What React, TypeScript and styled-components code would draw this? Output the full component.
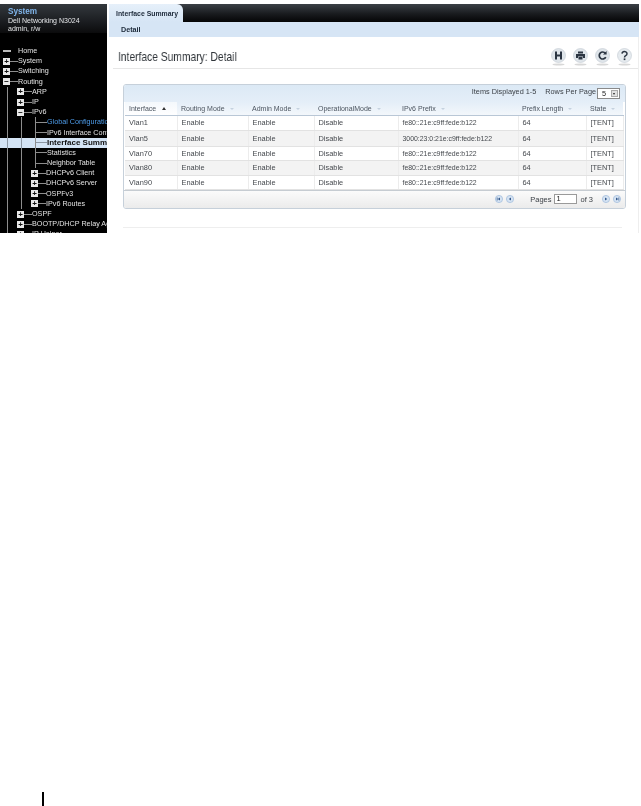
import React from 'react';
import styled, { createGlobalStyle } from 'styled-components';

const GlobalStyle = createGlobalStyle`
  html, body {
    margin: 0;
    padding: 0;
    background: #fff;
  }
  body {
    font-family: "Liberation Sans", Arial, sans-serif;
  }
`;

const Page = styled.div`
  width: 641px;
  height: 806px;
  overflow: hidden;
  display: flex;
  flex-direction: column;
  background: #fff;
`;

const Screenshot = styled.div`
  display: flex;
  gap: 2px;
  height: 229px;
  margin-top: 4px;
  filter: blur(0.3px);
  will-change: transform;
`;

const Sidebar = styled.aside`
  width: 107px;
  flex: none;
  background: #000;
  overflow: hidden;
  display: flex;
  flex-direction: column;
`;

const SystemBox = styled.div`
  height: 35px;
  padding: 3px 0 0 8px;
  box-sizing: border-box;
  background: linear-gradient(#33383d, #17191c 70%, #0b0b0c);
  color: #e4e6e8;
  font-size: 7px;
  line-height: 8px;
  margin-bottom: 7px;
`;

const SystemTitle = styled.div`
  color: #7fb4ea;
  font-size: 8.2px;
  font-weight: bold;
  line-height: 10px;
`;

const Tree = styled.div`
  display: flex;
  flex-direction: column;
  margin-top: 6px;
`;

const TreeRow = styled.div<{ $selected?: boolean }>`
  height: 10.2px;
  display: flex;
  align-items: stretch;
  white-space: nowrap;
  background: ${({ $selected }) => ($selected ? '#d4e4f5' : 'transparent')};
  color: ${({ $selected }) => ($selected ? '#111' : '#e2e2e2')};
`;

const Guide = styled.span<{ $line: boolean; $selected?: boolean }>`
  flex: none;
  width: 14px;
  position: relative;
  &::before {
    content: '';
    display: ${({ $line }) => ($line ? 'block' : 'none')};
    position: absolute;
    left: 7px;
    top: 0;
    bottom: 0;
    width: 1px;
    background: ${({ $selected }) => ($selected ? '#8c97a3' : '#8d8d8d')};
  }
`;

const ToggleCell = styled.span`
  flex: none;
  width: 15px;
  margin-left: 3px;
  display: flex;
  align-items: center;
`;

const Toggle = styled.span`
  width: 7px;
  height: 7px;
  flex: none;
  background: #e8e8e8;
  color: #111;
  font-size: 8px;
  font-weight: bold;
  line-height: 7px;
  text-align: center;
  overflow: hidden;
`;

const Connector = styled.span<{ $selected?: boolean }>`
  flex: 1;
  height: 1px;
  background: ${({ $selected }) => ($selected ? '#8c97a3' : '#8d8d8d')};
`;

const HomeDash = styled.span`
  flex: none;
  width: 8px;
  height: 2px;
  background: #bbb;
`;

const LeafCell = styled.span`
  flex: none;
  width: 12px;
  margin-left: 7px;
  display: flex;
  align-items: center;
  border-left: 1px solid #8d8d8d;
  box-sizing: border-box;
`;

const Label = styled.span<{ $tone?: 'link' | 'strong' }>`
  font-size: ${({ $tone }) => ($tone === 'strong' ? '8px' : '7.2px')};
  font-weight: ${({ $tone }) => ($tone === 'strong' ? 'bold' : 'normal')};
  color: ${({ $tone }) => ($tone === 'link' ? '#4d9be8' : 'inherit')};
  line-height: 10.2px;
`;

const Main = styled.main`
  flex: 1;
  min-width: 0;
  display: flex;
  flex-direction: column;
  margin-right: 2px;
`;

const TabBar = styled.div`
  height: 18px;
  flex: none;
  display: flex;
  background: linear-gradient(#3b4046, #191b1e 55%, #050506);
`;

const Tab = styled.div`
  width: 74px;
  background: linear-gradient(#e6f0fa, #d6e5f5);
  border-top-right-radius: 6px;
  color: #1d2a3a;
  font-size: 6.9px;
  font-weight: bold;
  line-height: 19px;
  padding-left: 7px;
  box-sizing: border-box;
`;

const SubNav = styled.div`
  height: 15px;
  flex: none;
  background: #d6e5f5;
  color: #1d2a3a;
  font-size: 7.2px;
  font-weight: bold;
  line-height: 16px;
  padding-left: 12px;
`;

const Content = styled.div`
  flex: 1;
  border-right: 1px solid #eeeeee;
`;

const TitleRow = styled.div`
  height: 32px;
  box-sizing: border-box;
  margin-left: 4px;
  padding: 8px 6px 0 5px;
  display: flex;
  align-items: center;
  justify-content: space-between;
  border-bottom: 1px solid #e6e6e6;
`;

const Title = styled.h1`
  margin: 0;
  font-size: 13px;
  font-weight: normal;
  color: #30353a;
  white-space: nowrap;
  transform: scaleX(0.79);
  transform-origin: left center;
`;

const Actions = styled.div`
  display: flex;
  gap: 7px;
`;

const ActionIcon = styled.svg`
  width: 15px;
  height: 18px;
  display: block;
`;

const Panel = styled.section`
  width: 501px;
  margin: 15px 0 0 14px;
  border: 1px solid #c6d0da;
  border-radius: 3px;
  overflow: hidden;
`;

const PanelTop = styled.div`
  height: 17px;
  display: flex;
  justify-content: flex-end;
  align-items: center;
  gap: 9px;
  padding-right: 5px;
  background: linear-gradient(#dce9f5, #e4eef8);
  font-size: 7.3px;
  color: #3a3f45;
`;

const PerPage = styled.span`
  margin-bottom: 4px;
`;

const RowsSelect = styled.span`
  width: 23px;
  height: 11px;
  margin-left: -8px;
  background: #fff;
  border: 1px solid #8a8a8a;
  box-sizing: border-box;
  display: flex;
  align-items: center;
  justify-content: space-between;
  padding: 0 1px 0 4px;
  color: #222;
`;

const SelectArrow = styled.span`
  width: 7px;
  height: 7px;
  background: #e2e2e2;
  border: 1px solid #aaa;
  box-sizing: border-box;
  position: relative;
  &::after {
    content: '';
    position: absolute;
    left: 1px;
    top: 2px;
    border: 1.5px solid transparent;
    border-top: 2px solid #222;
    border-bottom: 0;
  }
`;

const Grid = styled.table`
  width: 498px;
  margin-left: 1px;
  border-collapse: collapse;
  table-layout: fixed;
  font-size: 7.4px;
  color: #45494e;
`;

const HeadCell = styled.th<{ $active?: boolean; $w: number }>`
  width: ${({ $w }) => $w}px;
  height: 13px;
  box-sizing: border-box;
  padding: 0 0 0 4px;
  text-align: left;
  font-weight: normal;
  font-size: 7px;
  color: #4c5560;
  background: ${({ $active }) => ($active ? 'linear-gradient(#f4f8fc, #ffffff)' : 'linear-gradient(#e4eef8, #f3f7fb)')};
  border-bottom: 1px solid #b9c7d6;
  white-space: nowrap;
  overflow: hidden;
`;

const SortMark = styled.span<{ $active?: boolean }>`
  display: inline-block;
  margin-left: ${({ $active }) => ($active ? '6px' : '5px')};
  vertical-align: 1px;
  border-left: 2px solid transparent;
  border-right: 2px solid transparent;
  border-bottom: ${({ $active }) => ($active ? '3px solid #333' : '0')};
  border-top: ${({ $active }) => ($active ? '0' : '2px solid #c5d2df')};
`;

const BodyRow = styled.tr<{ $alt: boolean; $h: number }>`
  height: ${({ $h }) => $h}px;
  background: ${({ $alt }) => ($alt ? '#f3f3f3' : '#fff')};
`;

const Cell = styled.td<{ $narrow?: boolean }>`
  box-sizing: border-box;
  padding: 0 0 0 4px;
  border-bottom: 1px solid #e2e2e2;
  border-right: 1px solid #ececec;
  font-size: ${({ $narrow }) => ($narrow ? '6.9px' : 'inherit')};
  white-space: nowrap;
  overflow: hidden;
`;

const PanelBottom = styled.div`
  height: 18px;
  box-sizing: border-box;
  border-top: 1px solid #c6ccd2;
  background: linear-gradient(#fbfbfb, #ebebeb);
  display: flex;
  align-items: center;
  justify-content: flex-end;
  padding-right: 4px;
  font-size: 7.5px;
  color: #3a3f45;
`;

const NavGroup = styled.div<{ $before?: number; $after?: number }>`
  display: flex;
  gap: 3px;
  margin-left: ${({ $before }) => $before ?? 0}px;
  margin-right: ${({ $after }) => $after ?? 0}px;
`;

const NavIcon = styled.svg`
  width: 8px;
  height: 8px;
  display: block;
`;

const PageInput = styled.span`
  width: 23px;
  height: 10px;
  margin: 0 3px;
  background: #fff;
  border: 1px solid #9a9a9a;
  box-sizing: border-box;
  padding-left: 1px;
  line-height: 8px;
  color: #222;
`;

const EndRule = styled.div`
  width: 499px;
  margin: 18px 0 0 14px;
  height: 1px;
  background: #eeeeee;
`;

const PageMark = styled.div`
  width: 2px;
  height: 14px;
  margin: 559px 0 0 42px;
  background: #000;
`;

type Node = {
  label: string;
  guides: boolean[];
  kind: 'home' | 'open' | 'closed' | 'leaf';
  tone?: 'link' | 'strong';
  selected?: boolean;
};

const deep = [true, true];

const nodes: Node[] = [
  { label: 'Home', guides: [], kind: 'home' },
  { label: 'System', guides: [], kind: 'closed' },
  { label: 'Switching', guides: [], kind: 'closed' },
  { label: 'Routing', guides: [], kind: 'open' },
  { label: 'ARP', guides: [true], kind: 'closed' },
  { label: 'IP', guides: [true], kind: 'closed' },
  { label: 'IPv6', guides: [true], kind: 'open' },
  { label: 'Global Configuration', guides: deep, kind: 'leaf', tone: 'link' },
  { label: 'IPv6 Interface Configuration', guides: deep, kind: 'leaf' },
  { label: 'Interface Summary', guides: deep, kind: 'leaf', tone: 'strong', selected: true },
  { label: 'Statistics', guides: deep, kind: 'leaf' },
  { label: 'Neighbor Table', guides: deep, kind: 'leaf' },
  { label: 'DHCPv6 Client', guides: deep, kind: 'closed' },
  { label: 'DHCPv6 Server', guides: deep, kind: 'closed' },
  { label: 'OSPFv3', guides: deep, kind: 'closed' },
  { label: 'IPv6 Routes', guides: deep, kind: 'closed' },
  { label: 'OSPF', guides: [true], kind: 'closed' },
  { label: 'BOOTP/DHCP Relay Agent', guides: [true], kind: 'closed' },
  { label: 'IP Helper', guides: [true], kind: 'closed' },
];

const columns = [
  { title: 'Interface', width: 52 },
  { title: 'Routing Mode', width: 71 },
  { title: 'Admin Mode', width: 66 },
  { title: 'OperationalMode', width: 84 },
  { title: 'IPv6 Prefix', width: 120 },
  { title: 'Prefix Length', width: 68 },
  { title: 'State', width: 37 },
];

const rows = [
  { name: 'Vlan1', prefix: 'fe80::21e:c9ff:fede:b122', h: 15 },
  { name: 'Vlan5', prefix: '3000:23:0:21e:c9ff:fede:b122', h: 16 },
  { name: 'Vlan70', prefix: 'fe80::21e:c9ff:fede:b122', h: 14 },
  { name: 'Vlan80', prefix: 'fe80::21e:c9ff:fede:b122', h: 15 },
  { name: 'Vlan90', prefix: 'fe80::21e:c9ff:fede:b122', h: 14 },
];

function TreeItem({ node }: { node: Node }) {
  const { label, guides, kind, tone, selected } = node;
  return (
    <TreeRow $selected={selected}>
      {guides.map((line, i) => (
        <Guide key={i} $line={line} $selected={selected} />
      ))}
      {kind === 'leaf' ? (
        <LeafCell>
          <Connector $selected={selected} />
        </LeafCell>
      ) : (
        <ToggleCell>
          {kind === 'home' ? (
            <HomeDash />
          ) : (
            <>
              <Toggle>{kind === 'open' ? '−' : '+'}</Toggle>
              <Connector />
            </>
          )}
        </ToggleCell>
      )}
      <Label $tone={tone}>{label}</Label>
    </TreeRow>
  );
}

function SaveIcon() {
  return (
    <ActionIcon viewBox="0 0 15 18">
      <ellipse cx="7.5" cy="16.5" rx="6" ry="1" fill="#d8d8d8" />
      <circle cx="7.5" cy="7.5" r="7" fill="#dfe5ea" stroke="#c2cad2" strokeWidth="0.6" />
      <path d="M4 3.5h2v3h3v-3h2v8H9V8.5H6v3H4z" fill="#2b3542" />
    </ActionIcon>
  );
}

function PrintIcon() {
  return (
    <ActionIcon viewBox="0 0 15 18">
      <ellipse cx="7.5" cy="16.5" rx="6" ry="1" fill="#d8d8d8" />
      <circle cx="7.5" cy="7.5" r="7" fill="#dfe5ea" stroke="#c2cad2" strokeWidth="0.6" />
      <path d="M5 3.5h5v2H5zM3 6h9v4h-2V8.5H5V10H3zM5.5 9h4v2.5h-4z" fill="#2b3542" />
    </ActionIcon>
  );
}

function RefreshIcon() {
  return (
    <ActionIcon viewBox="0 0 15 18">
      <ellipse cx="7.5" cy="16.5" rx="6" ry="1" fill="#d8d8d8" />
      <circle cx="7.5" cy="7.5" r="7" fill="#dfe5ea" stroke="#c2cad2" strokeWidth="0.6" />
      <path d="M10.8 9.2A3.5 3.5 0 1 1 10.4 5.2" fill="none" stroke="#2b3542" strokeWidth="1.7" />
      <path d="M11.6 3v3.6H8z" fill="#2b3542" />
    </ActionIcon>
  );
}

function HelpIcon() {
  return (
    <ActionIcon viewBox="0 0 15 18">
      <ellipse cx="7.5" cy="16.5" rx="6" ry="1" fill="#d8d8d8" />
      <circle cx="7.5" cy="7.5" r="7" fill="#e6ebef" stroke="#c2cad2" strokeWidth="0.6" />
      <path d="M5 5.6a2.5 2.2 0 1 1 3.7 2c-.9.5-1.2.9-1.2 1.9" fill="none" stroke="#2b3542" strokeWidth="1.5" />
      <rect x="6.7" y="10.4" width="1.7" height="1.7" fill="#2b3542" />
    </ActionIcon>
  );
}

function PagerIcon({ dir, end }: { dir: 'left' | 'right'; end?: boolean }) {
  const arrow = dir === 'left' ? 'M5 2.4v3.2L2.8 4z' : 'M3 2.4v3.2L5.2 4z';
  const cap = dir === 'left' ? 'M1.8 2.4h.7v3.2h-.7z' : 'M5.5 2.4h.7v3.2h-.7z';
  return (
    <NavIcon viewBox="0 0 8 8">
      <circle cx="4" cy="4" r="3.6" fill="#d5e3f3" stroke="#9db9da" strokeWidth="0.7" />
      <path d={arrow} fill="#34578a" />
      {end && <path d={cap} fill="#34578a" />}
    </NavIcon>
  );
}

export default function App() {
  return (
    <>
      <GlobalStyle />
      <Page>
        <Screenshot>
          <Sidebar>
            <SystemBox>
              <SystemTitle>System</SystemTitle>
              <div>Dell Networking N3024</div>
              <div>admin, r/w</div>
            </SystemBox>
            <Tree>
              {nodes.map((node) => (
                <TreeItem key={node.label} node={node} />
              ))}
            </Tree>
          </Sidebar>
          <Main>
            <TabBar>
              <Tab>Interface Summary</Tab>
            </TabBar>
            <SubNav>Detail</SubNav>
            <Content>
              <TitleRow>
                <Title>Interface Summary: Detail</Title>
                <Actions>
                  <SaveIcon />
                  <PrintIcon />
                  <RefreshIcon />
                  <HelpIcon />
                </Actions>
              </TitleRow>
              <Panel>
                <PanelTop>
                  <PerPage>Items Displayed 1-5</PerPage>
                  <PerPage>Rows Per Page</PerPage>
                  <RowsSelect>
                    5
                    <SelectArrow />
                  </RowsSelect>
                </PanelTop>
                <Grid>
                  <thead>
                    <tr>
                      {columns.map((col, i) => (
                        <HeadCell key={col.title} $w={col.width} $active={i === 0}>
                          {col.title}
                          <SortMark $active={i === 0} />
                        </HeadCell>
                      ))}
                    </tr>
                  </thead>
                  <tbody>
                    {rows.map((row, i) => (
                      <BodyRow key={row.name} $alt={i % 2 === 1} $h={row.h}>
                        <Cell>{row.name}</Cell>
                        <Cell>Enable</Cell>
                        <Cell>Enable</Cell>
                        <Cell>Disable</Cell>
                        <Cell $narrow>{row.prefix}</Cell>
                        <Cell>64</Cell>
                        <Cell>[TENT]</Cell>
                      </BodyRow>
                    ))}
                  </tbody>
                </Grid>
                <PanelBottom>
                  <NavGroup $after={16}>
                    <PagerIcon dir="left" end />
                    <PagerIcon dir="left" />
                  </NavGroup>
                  <span>Pages</span>
                  <PageInput>1</PageInput>
                  <span>of 3</span>
                  <NavGroup $before={9}>
                    <PagerIcon dir="right" />
                    <PagerIcon dir="right" end />
                  </NavGroup>
                </PanelBottom>
              </Panel>
              <EndRule />
            </Content>
          </Main>
        </Screenshot>
        <PageMark />
      </Page>
    </>
  );
}
